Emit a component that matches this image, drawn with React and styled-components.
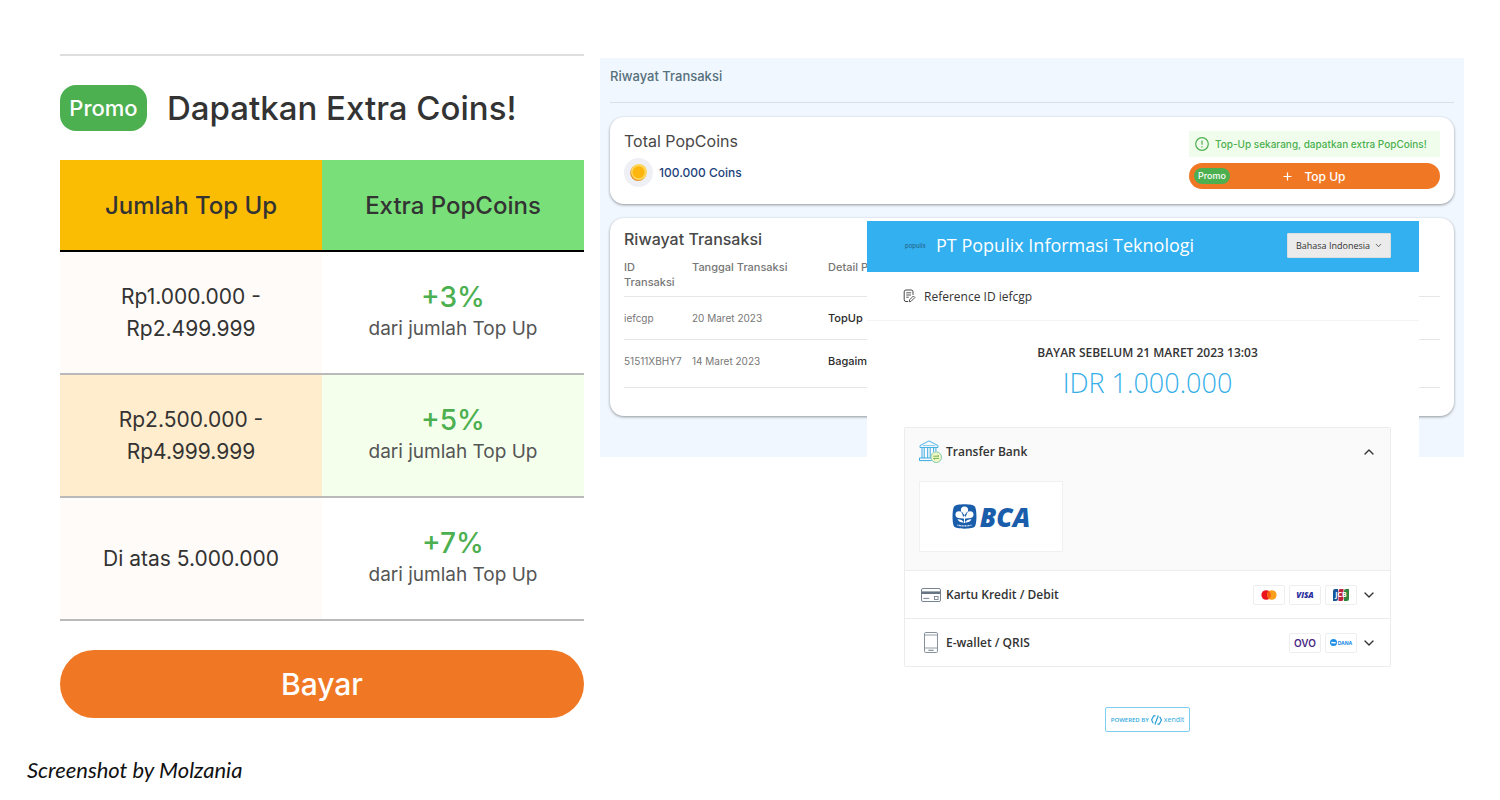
import styled, { createGlobalStyle } from "styled-components";
import { ChevronDown, ChevronUp } from "lucide-react";

const GlobalStyle = createGlobalStyle`
  * {
    box-sizing: border-box;
  }

  body {
    margin: 0;
    background: #ffffff;
    font-family: Inter, "Liberation Sans", sans-serif;
  }

  h1, h2, h3, p {
    margin: 0;
    font-weight: 400;
  }

  button {
    border: 0;
    padding: 0;
    background: none;
    font-family: inherit;
    color: inherit;
    cursor: pointer;
  }
`;

const Page = styled.div`
  padding: 54px 36px 0 60px;
`;

const Columns = styled.main`
  display: grid;
  grid-template-columns: 524fr 864fr;
  gap: 16px;
  align-items: start;
`;

/* promo */

const PromoPanel = styled.section`
  border-top: 2px solid #dedede;
  padding-top: 29px;
`;

const PromoHeader = styled.div`
  display: flex;
  align-items: center;
  gap: 20px;
  height: 46px;
  margin-bottom: 29px;
`;

const PromoBadge = styled.span`
  display: flex;
  align-items: center;
  justify-content: center;
  width: 87px;
  height: 46px;
  border-radius: 16px;
  background: #4caf50;
  color: #ffffff;
  font-size: 22px;
  font-weight: 500;
`;

const PromoTitle = styled.h1`
  color: #333333;
  font-size: 33px;
  font-weight: 500;
  line-height: 46px;
  white-space: nowrap;
`;

const PromoTable = styled.table`
  width: 100%;
  table-layout: fixed;
  border-spacing: 0;
  text-align: center;

  th,
  td {
    padding: 0;
  }
`;

const PromoHead = styled.th`
  height: 92px;
  border-bottom: 2px solid #000000;
  background: ${({ $color }) => $color};
  color: #333333;
  font-size: 24px;
  font-weight: 500;
`;

const PromoCell = styled.td`
  height: 123px;
  border-bottom: 2px solid #bababa;
  background: ${({ $color }) => $color};
  color: #333333;
  font-size: 21px;
  line-height: 32px;
`;

const Bonus = styled.p`
  color: #4caf50;
  font-size: 28px;
  font-weight: 500;
`;

const BonusNote = styled.p`
  color: #555555;
  font-size: 19px;
`;

const PayButton = styled.button`
  width: 100%;
  height: 68px;
  margin-top: 29px;
  border-radius: 34px;
  background: #f07824;
  color: #ffffff;
  font-size: 30px;
  font-weight: 500;
`;

/* history */

const Stage = styled.div`
  display: grid;
  grid-template-columns: 267fr 552fr 45fr;
  align-items: start;
`;

const HistoryPanel = styled.section`
  grid-row: 1;
  grid-column: 1 / -1;
  margin-top: 4px;
  padding: 0 10px 41px;
  background: #f1f7fe;
`;

const HistoryTitle = styled.h2`
  height: 45px;
  margin-bottom: 14px;
  border-bottom: 1px solid #d8dfe6;
  color: #56707c;
  font-size: 13px;
  font-weight: 500;
  line-height: 36px;
`;

const Card = styled.div`
  padding: 14px;
  border-radius: 14px;
  background: #ffffff;
  box-shadow: 0 1px 3px rgba(0, 0, 0, 0.4);
`;

const BalanceCard = styled(Card)`
  display: flex;
  justify-content: space-between;
  height: 87px;
  margin-bottom: 14px;
`;

const HistoryCard = styled(Card)`
  height: 198px;
  padding-top: 11px;
`;

const CardTitle = styled.h3`
  color: #484848;
  font-size: 16px;
  font-weight: ${({ $strong }) => ($strong ? 500 : 400)};
  line-height: 20px;
`;

const Balance = styled.p`
  display: flex;
  align-items: center;
  gap: 6px;
  margin-top: 7px;
  color: #1d427c;
  font-size: 12px;
  font-weight: 500;
`;

const TopUp = styled.div`
  width: 251px;
`;

const TopUpNote = styled.p`
  display: flex;
  align-items: center;
  gap: 6px;
  height: 26px;
  margin-bottom: 6px;
  padding: 0 6px;
  background: #f1fdec;
  color: #4caf50;
  font-size: 10px;
  font-weight: 500;
  white-space: nowrap;
`;

const TopUpButton = styled.button`
  display: grid;
  grid-template-columns: 1fr auto 1fr;
  align-items: center;
  width: 100%;
  height: 26px;
  padding: 0 5px;
  border-radius: 13px;
  background: #f07824;
  color: #ffffff;
  font-size: 12px;
  font-weight: 500;
`;

const TopUpLabel = styled.span`
  display: flex;
  align-items: center;
  gap: 12px;
`;

const SmallBadge = styled.span`
  justify-self: start;
  padding: 0 4px;
  border-radius: 8px;
  background: #4caf50;
  font-size: 9px;
  line-height: 16px;
`;

const HistoryTable = styled.table`
  width: 100%;
  margin-top: 11px;
  table-layout: fixed;
  border-spacing: 0;
  text-align: left;
  font-size: 11px;

  th,
  td {
    padding: 0;
    border-bottom: 1px solid #e6e6e6;
    white-space: nowrap;
  }

  th {
    height: 37px;
    color: #777777;
    font-weight: 500;
    line-height: 15px;
    vertical-align: top;
  }

  td {
    height: 43px;
    color: #777777;
    font-size: 10px;
  }

  tr:last-child td {
    height: 48px;
    padding-bottom: 5px;
  }

  td:last-child {
    color: #2b2b2b;
    font-size: 11px;
    font-weight: 500;
  }
`;

/* checkout */

const Checkout = styled.section`
  grid-row: 1;
  grid-column: 2;
  z-index: 1;
  margin-top: 167px;
  background: #ffffff;
  color: #333333;
  font-family: "Open Sans", sans-serif;
`;

const CheckoutBar = styled.header`
  display: flex;
  align-items: center;
  height: 51px;
  padding: 0 28px 3px 38px;
  background: #33b0ef;
`;

const Merchant = styled.h2`
  flex: 1;
  margin-left: 10px;
  color: #ffffff;
  font-size: 18px;
  white-space: nowrap;
`;

const MerchantLogo = styled.span`
  width: 21px;
  color: #235a80;
  font-family: Inter, sans-serif;
  font-size: 6px;
`;

const Language = styled.label`
  display: grid;
  align-items: center;
  width: 104px;

  select {
    grid-area: 1 / 1;
    width: 100%;
    height: 25px;
    padding: 0 8px;
    border: 1px solid #dddddd;
    border-radius: 1px;
    background: #ebebeb;
    color: #333333;
    font-family: inherit;
    font-size: 9px;
    appearance: none;
  }

  svg {
    grid-area: 1 / 1;
    justify-self: end;
    margin-right: 8px;
    pointer-events: none;
  }
`;

const Reference = styled.p`
  display: flex;
  align-items: center;
  gap: 8px;
  height: 49px;
  padding-left: 36px;
  border-bottom: 1px solid #f4f4f4;
  font-size: 12px;
`;

const CheckoutBody = styled.div`
  padding: 24px 28px 13px 37px;
  text-align: center;
`;

const Deadline = styled.p`
  font-size: 12px;
  font-weight: 600;
  line-height: 16px;
`;

const Amount = styled.p`
  margin: 4px 0 26px;
  color: #33aee9;
  font-size: 27px;
  font-weight: 300;
  line-height: 36px;
`;

const Methods = styled.div`
  border: 1px solid #ececec;
  border-radius: 2px;
`;

const Method = styled.div`
  border-top: ${({ $first }) => ($first ? 0 : "1px solid #ececec")};
  background: ${({ $open }) => ($open ? "#fafafa" : "#ffffff")};
`;

const MethodButton = styled.button`
  display: flex;
  align-items: center;
  gap: 4px;
  width: 100%;
  height: 47px;
  padding: 0 13px 0 14px;
  font-size: 12px;
  font-weight: 600;
`;

const MethodIcon = styled.span`
  display: flex;
  justify-content: center;
  width: 23px;
`;

const MethodName = styled.span`
  flex: 1;
  text-align: left;
`;

const BankOptions = styled.div`
  padding: 6px 14px 18px;
`;

const BankButton = styled.button`
  display: flex;
  align-items: center;
  justify-content: center;
  gap: 3px;
  width: 144px;
  height: 71px;
  border: 1px solid #f0f0f0;
  background: #ffffff;
  color: #1a5dab;
  font-size: 26px;
  font-style: italic;
  font-weight: 800;
`;

const Brand = styled.span`
  display: flex;
  align-items: center;
  justify-content: center;
  gap: 1px;
  width: 32px;
  height: 20px;
  border: 1px solid #eeeeee;
  border-radius: 2px;
  background: #ffffff;
  color: ${({ $color }) => $color};
  font-family: ${({ $font }) => $font || "inherit"};
  font-size: ${({ $size }) => $size || 8}px;
  font-style: ${({ $italic }) => ($italic ? "italic" : "normal")};
  font-weight: ${({ $weight }) => $weight || 700};
`;

const Powered = styled.a`
  display: inline-flex;
  align-items: center;
  gap: 2px;
  height: 25px;
  margin-top: 40px;
  padding: 0 5px;
  border: 1px solid #7fcdf0;
  border-radius: 2px;
  color: #33a9de;
  font-size: 6px;
  font-weight: 600;
  text-decoration: none;
`;

const XenditName = styled.span`
  font-size: 7px;
  font-weight: 400;
`;

const Caption = styled.p`
  margin: 13px 0 0 -33px;
  color: #111111;
  font-family: Lato, sans-serif;
  font-size: 22px;
  font-style: italic;
  line-height: 24px;
`;

const CoinIcon = () => (
  <svg width="29" height="29" viewBox="0 0 29 29">
    <circle cx="14.5" cy="14.5" r="14.5" fill="#eff0f5" />
    <circle cx="14.2" cy="15" r="8" fill="#e2912b" />
    <circle cx="15" cy="14" r="8" fill="#ffd65c" />
    <circle cx="14.6" cy="14.3" r="6" fill="#fdb60d" />
  </svg>
);

const AlertIcon = () => (
  <svg width="14" height="14" viewBox="0 0 14 14" fill="none" stroke="#4caf50">
    <circle cx="7" cy="7" r="6.3" strokeWidth="1.2" />
    <path d="M7 3.4v4.4M7 9.2v1.3" strokeWidth="1.2" />
  </svg>
);

const PlusIcon = () => (
  <svg width="9" height="9" viewBox="0 0 9 9" stroke="#ffffff" strokeWidth="1.2">
    <path d="M4.5 0.5v8M0.5 4.5h8" />
  </svg>
);

const NoteIcon = () => (
  <svg width="13" height="14" viewBox="0 0 13 14" fill="none" stroke="#444444">
    <path d="M5 12.5H3a1.8 1.8 0 0 1-1.8-1.8V2.8A1.8 1.8 0 0 1 3 1h5.2A1.8 1.8 0 0 1 10 2.8v3" />
    <path d="M3.2 3.8h4.8M3.2 6h4.8M3.2 8.2h2.6" strokeWidth="0.9" />
    <path d="M6.2 12.8l.4-2 3.8-3.8 1.5 1.5-3.8 3.8z" strokeWidth="0.9" />
  </svg>
);

const BankIcon = () => (
  <svg width="23" height="23" viewBox="0 0 23 23" fill="none" stroke="#3aaae4">
    <path d="M1 7.5V5.6L10 .9l9 4.7v1.9z" strokeWidth="0.9" />
    <path d="M3.8 5.6h12.4" strokeWidth="0.6" />
    <path
      d="M3 7.5V18M5.2 7.5V18M8.7 7.5V18M11.2 7.5V18M14.6 7.5v4.3M16.9 7.5v4"
      strokeWidth="1"
    />
    <path d="M12 18H.5v2.6H12.500" strokeWidth="1" />
    <circle cx="17.2" cy="17.2" r="5.3" fill="#f3f8c6" stroke="#7cc9b0" />
    <path
      d="M14.3 16.2h5.6l-1.3-1.1M20.1 18.4h-5.6l1.3 1.1"
      stroke="#65ac45"
      strokeWidth="0.9"
    />
  </svg>
);

const CardIcon = () => (
  <svg width="20" height="14" viewBox="0 0 20 14" fill="none" stroke="#687684">
    <rect x=".5" y=".5" width="19" height="13" rx="1.4" strokeWidth="0.9" />
    <path d="M.5 4.7h19" strokeWidth="2.6" />
    <path d="M2.3 10.4h6" strokeWidth="0.9" />
    <rect x="13.5" y="8.5" width="3.6" height="3" strokeWidth="0.8" />
  </svg>
);

const PhoneIcon = () => (
  <svg width="14" height="21" viewBox="0 0 14 21" fill="none" stroke="#87929c">
    <rect x=".5" y=".5" width="13" height="20" rx="1.3" />
    <path d="M.5 3h13M.5 16h13" strokeWidth="0.9" />
    <path d="M4.3 18.3h5.4" strokeWidth="1.2" />
  </svg>
);

const BcaIcon = () => (
  <svg width="25" height="25" viewBox="0 0 25 25">
    <path
      d="M12.5.3c5 0 9.3.8 10.3 2.1 2.2 2.8 2.2 17.4 0 20.2-1 1.3-5.3 2.1-10.3 2.1s-9.3-.8-10.3-2.1C0 19.8 0 5.2 2.2 2.4 3.2 1.1 7.5.3 12.5.3z"
      fill="#1a5dab"
    />
    <g fill="#ffffff">
      <circle cx="12.5" cy="6" r="3.6" />
      <path d="M9.2 7.2h6.6l-3.3 5z" />
      <circle cx="6.9" cy="10.6" r="3.4" />
      <path d="M8 7.500l5 7.300-6.500-.8z" />
      <circle cx="18.1" cy="10.6" r="3.4" />
      <path d="M17 7.500l-5 7.300 6.500-.8z" />
      <path d="M12 12h1v7h-1z" />
      <path d="M5.5 15.3c2.500-.2 5 .8 6.500 3.200-2.700.4-5.200-.8-6.500-3.200zM19.500 15.300c-2.500-.2-5 .8-6.500 3.200 2.700.4 5.200-.8 6.500-3.200z" />
    </g>
    <path
      d="M12.3 11.500L9.500 7.800M12.700 11.500l2.800-3.700"
      fill="none"
      stroke="#1a5dab"
      strokeWidth="0.8"
    />
    <path
      d="M5.5 21c4 1.300 10 1.300 14 0"
      fill="none"
      stroke="#ffffff"
      strokeDasharray="1 .5"
      strokeWidth="1.2"
    />
  </svg>
);

const MastercardIcon = () => (
  <svg width="16" height="10" viewBox="0 0 16 10">
    <circle cx="5.2" cy="5" r="4.8" fill="#e9141d" />
    <circle cx="10.8" cy="5" r="4.8" fill="#f99f1b" />
    <path d="M8 1.1a4.8 4.8 0 0 1 0 7.8 4.8 4.8 0 0 1 0-7.8z" fill="#f96013" />
  </svg>
);

const JcbIcon = () => (
  <svg width="16" height="12" viewBox="0 0 16 12">
    <path d="M2 0h3v10a2 2 0 0 1-2 2H0V2a2 2 0 0 1 2-2z" fill="#17569b" />
    <path d="M7.5 0h3v10a2 2 0 0 1-2 2h-3V2a2 2 0 0 1 2-2z" fill="#bd2440" />
    <path d="M13 0h3v10a2 2 0 0 1-2 2h-3V2a2 2 0 0 1 2-2z" fill="#31873f" />
    <text x="8" y="8.3" textAnchor="middle" fontSize="7" fontWeight="700" fill="#ffffff">
      JCB
    </text>
  </svg>
);

const DanaIcon = () => (
  <svg width="7" height="7" viewBox="0 0 7 7">
    <circle cx="3.5" cy="3.5" r="3.5" fill="#1c8ce4" />
    <path d="M1.3 3c1.5-1 2.8.6 4.4-.3v1.5c-1.6.9-2.9-.7-4.4.3z" fill="#ffffff" />
  </svg>
);

const XenditIcon = () => (
  <svg width="11" height="10" viewBox="0 0 11 10" fill="none" stroke="#2b9fd6">
    <path
      d="M7.300.5L3.900 9.500M4.600.8H2.700L.6 4.900l1.700 3.300M6.400 9.200h1.900l2.100-4.200-1.700-3.300"
      strokeWidth="1.200"
    />
  </svg>
);

const tiers = [
  {
    amount: ["Rp1.000.000 -", "Rp2.499.999"],
    bonus: "+3%",
    colors: ["#fffbf8", "#ffffff"],
  },
  {
    amount: ["Rp2.500.000 -", "Rp4.999.999"],
    bonus: "+5%",
    colors: ["#ffedcd", "#f4ffec"],
  },
  {
    amount: ["Di atas 5.000.000"],
    bonus: "+7%",
    colors: ["#fffbf8", "#ffffff"],
  },
];

const transactions = [
  { id: "iefcgp", date: "20 Maret 2023", detail: "TopUp" },
  { id: "51511XBHY7", date: "14 Maret 2023", detail: "Bagaimana" },
];

const Promo = () => (
  <PromoPanel>
    <PromoHeader>
      <PromoBadge>Promo</PromoBadge>
      <PromoTitle>Dapatkan Extra Coins!</PromoTitle>
    </PromoHeader>
    <PromoTable>
      <thead>
        <tr>
          <PromoHead $color="#fbbd04">Jumlah Top Up</PromoHead>
          <PromoHead $color="#79df79">Extra PopCoins</PromoHead>
        </tr>
      </thead>
      <tbody>
        {tiers.map(({ amount, bonus, colors }) => (
          <tr key={bonus}>
            <PromoCell $color={colors[0]}>
              {amount.map((line) => (
                <p key={line}>{line}</p>
              ))}
            </PromoCell>
            <PromoCell $color={colors[1]}>
              <Bonus>{bonus}</Bonus>
              <BonusNote>dari jumlah Top Up</BonusNote>
            </PromoCell>
          </tr>
        ))}
      </tbody>
    </PromoTable>
    <PayButton>Bayar</PayButton>
  </PromoPanel>
);

const History = () => (
  <HistoryPanel>
    <HistoryTitle>Riwayat Transaksi</HistoryTitle>
    <BalanceCard>
      <div>
        <CardTitle>Total PopCoins</CardTitle>
        <Balance>
          <CoinIcon />
          100.000 Coins
        </Balance>
      </div>
      <TopUp>
        <TopUpNote>
          <AlertIcon />
          Top-Up sekarang, dapatkan extra PopCoins!
        </TopUpNote>
        <TopUpButton>
          <SmallBadge>Promo</SmallBadge>
          <TopUpLabel>
            <PlusIcon />
            Top Up
          </TopUpLabel>
        </TopUpButton>
      </TopUp>
    </BalanceCard>
    <HistoryCard>
      <CardTitle $strong>Riwayat Transaksi</CardTitle>
      <HistoryTable>
        <colgroup>
          <col width="68" />
          <col width="136" />
          <col />
        </colgroup>
        <thead>
          <tr>
            <th>
              ID
              <br />
              Transaksi
            </th>
            <th>Tanggal Transaksi</th>
            <th>Detail Pesanan</th>
          </tr>
        </thead>
        <tbody>
          {transactions.map(({ id, date, detail }) => (
            <tr key={id}>
              <td>{id}</td>
              <td>{date}</td>
              <td>{detail}</td>
            </tr>
          ))}
        </tbody>
      </HistoryTable>
    </HistoryCard>
  </HistoryPanel>
);

const Payment = () => (
  <Checkout>
    <CheckoutBar>
      <MerchantLogo>populix</MerchantLogo>
      <Merchant>PT Populix Informasi Teknologi</Merchant>
      <Language>
        <select aria-label="Bahasa">
          <option>Bahasa Indonesia</option>
        </select>
        <ChevronDown size={9} />
      </Language>
    </CheckoutBar>
    <Reference>
      <NoteIcon />
      Reference ID iefcgp
    </Reference>
    <CheckoutBody>
      <Deadline>BAYAR SEBELUM 21 MARET 2023 13:03</Deadline>
      <Amount>IDR 1.000.000</Amount>
      <Methods>
        <Method $first $open>
          <MethodButton aria-expanded="true">
            <MethodIcon>
              <BankIcon />
            </MethodIcon>
            <MethodName>Transfer Bank</MethodName>
            <ChevronUp size={16} />
          </MethodButton>
          <BankOptions>
            <BankButton>
              <BcaIcon />
              BCA
            </BankButton>
          </BankOptions>
        </Method>
        <Method>
          <MethodButton aria-expanded="false">
            <MethodIcon>
              <CardIcon />
            </MethodIcon>
            <MethodName>Kartu Kredit / Debit</MethodName>
            <Brand>
              <MastercardIcon />
            </Brand>
            <Brand $color="#2a2f9e" $weight={800} $italic>
              VISA
            </Brand>
            <Brand>
              <JcbIcon />
            </Brand>
            <ChevronDown size={16} />
          </MethodButton>
        </Method>
        <Method>
          <MethodButton aria-expanded="false">
            <MethodIcon>
              <PhoneIcon />
            </MethodIcon>
            <MethodName>E-wallet / QRIS</MethodName>
            <Brand $color="#4b2a86" $font="Inter, sans-serif" $size={10} $weight={600}>
              OVO
            </Brand>
            <Brand $color="#1c8ce4" $font="Inter, sans-serif" $size={5}>
              <DanaIcon />
              DANA
            </Brand>
            <ChevronDown size={16} />
          </MethodButton>
        </Method>
      </Methods>
      <Powered href="#xendit">
        POWERED BY
        <XenditIcon />
        <XenditName>xendit</XenditName>
      </Powered>
    </CheckoutBody>
  </Checkout>
);

export default function App() {
  return (
    <Page>
      <GlobalStyle />
      <Columns>
        <Promo />
        <Stage>
          <History />
          <Payment />
        </Stage>
      </Columns>
      <Caption>Screenshot by Molzania</Caption>
    </Page>
  );
}
